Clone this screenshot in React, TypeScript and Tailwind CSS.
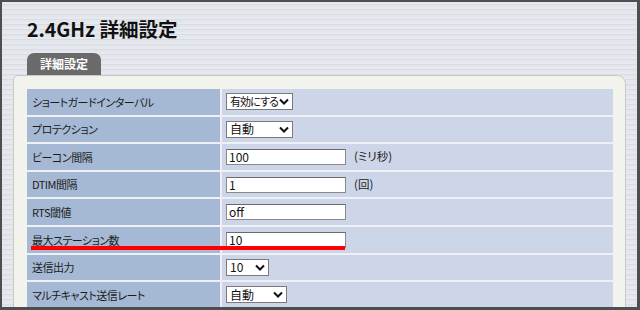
const font = "font-['Noto_Sans_CJK_JP','Noto_Sans',sans-serif] [font-feature-settings:'palt']";

type Row = {
  label: string;
  kind: "select" | "input";
  value: string;
  width: string;
  unit?: string;
  tight?: boolean;
};

const rows: Row[] = [
  { label: "ショートガードインターバル", kind: "select", value: "有効にする", width: "w-[67px]", tight: true },
  { label: "プロテクション", kind: "select", value: "自動", width: "w-[67px]" },
  { label: "ビーコン間隔", kind: "input", value: "100", width: "w-[120px]", unit: "(ミリ秒)" },
  { label: "DTIM間隔", kind: "input", value: "1", width: "w-[120px]", unit: "(回)" },
  { label: "RTS閾値", kind: "input", value: "off", width: "w-[120px]" },
  { label: "最大ステーション数", kind: "input", value: "10", width: "w-[120px]" },
  { label: "送信出力", kind: "select", value: "10", width: "w-[43px]" },
  { label: "マルチキャスト送信レート", kind: "select", value: "自動", width: "w-[61px]" },
];

const Chevron = () => (
  <svg width="10" height="7" viewBox="0 0 10 7" className="shrink-0">
    <polyline points="1,1.5 5,5.5 9,1.5" fill="none" stroke="#111" strokeWidth="2" />
  </svg>
);

const Field = ({ row }: { row: Row }) => {
  if (row.kind === "select") {
    return (
      <div
        className={`${row.width} h-[17px] bg-white border border-[#7a7a7a] flex items-center justify-between pl-[3px] pr-[3px] leading-none text-[#111] whitespace-nowrap ${
          row.tight ? "text-[11px] tracking-[-0.9px]" : "text-[12px]"
        }`}
      >
        <span>{row.value}</span>
        <Chevron />
      </div>
    );
  }
  return (
    <div
      className={`${row.width} h-[16px] bg-white border border-[#8a8a8a] border-t-[#6a6a6a] flex items-center pl-[2px] text-[12px] leading-none text-[#111]`}
    >
      {row.value}
    </div>
  );
};

export default function App() {
  return (
    <div
      className={`${font} w-[640px] h-[310px] overflow-hidden border-t-2 border-l-2 border-r-[3px] border-b-[3px] border-[#4e4e4e] bg-[repeating-linear-gradient(180deg,#e6e9ee_0px,#e6e9ee_2px,#d9dce3_2px,#d9dce3_3px,#e2e5eb_3px,#e2e5eb_5px)] flex flex-col`}
    >
      <h1 className="pl-[25px] pt-[15px] text-[19.5px] font-bold leading-[24px] text-[#111]">
        2.4GHz 詳細設定
      </h1>
      <div className="pl-[25px] mt-[12px]">
        <div className="w-[74px] h-[22px] bg-[#6a6a6a] rounded-t-[7px] flex items-center justify-center text-white font-bold text-[12px]">
          詳細設定
        </div>
      </div>
      <div className="ml-[11px] w-[613px] flex-1 bg-[#f3f3ed] border border-[#c8c8c4] border-b-0 rounded-tl-[5px] rounded-tr-[9px] pl-[13px] pt-[13px]">
        <div className="relative w-[586px] flex flex-col gap-[2px] bg-[#eef0f6]">
          {rows.map((row) => (
            <div key={row.label} className="flex h-[25.6px] gap-[2px]">
              <div className="w-[193px] bg-[#a5b9d5] flex items-center pl-[5px] text-[11px] tracking-[-0.5px] text-[#1c1c1c] whitespace-nowrap">
                {row.label}
              </div>
              <div className="flex-1 bg-[#cdd5e8] flex items-center pl-[4px] gap-[8px]">
                <Field row={row} />
                {row.unit && <span className="text-[11.5px] text-[#1c1c1c]">{row.unit}</span>}
              </div>
            </div>
          ))}
          {/* red marker under 最大ステーション数 */}
          <div className="absolute left-[4px] top-[157px] w-[314px] h-[4px] bg-[#ff0000]" />
        </div>
      </div>
    </div>
  );
}
